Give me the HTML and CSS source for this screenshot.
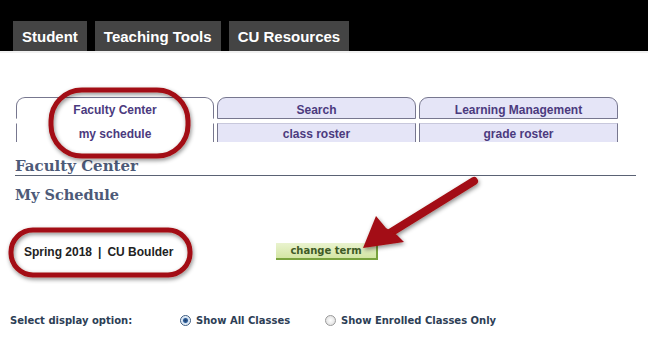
FILE: index.html
```html
<!DOCTYPE html>
<html lang="en">
<head>
    <meta charset="UTF-8">
    <title>My Schedule - Faculty Center</title>
    <link rel="stylesheet" href="styles.css">
</head>
<body>
    <div class="topbar">
        <div class="top-tab">Student</div>
        <div class="top-tab">Teaching Tools</div>
        <div class="top-tab">CU Resources</div>
    </div>

    <div class="page">
        <div class="tabs">
            <div class="tab-col active">
                <div class="tab-top">Faculty Center</div>
                <div class="tab-sub">my schedule</div>
            </div>
            <div class="tab-col">
                <div class="tab-top">Search</div>
                <div class="tab-sub">class roster</div>
            </div>
            <div class="tab-col">
                <div class="tab-top">Learning Management</div>
                <div class="tab-sub">grade roster</div>
            </div>
        </div>

        <h2 class="section-title">Faculty Center</h2>
        <h1 class="page-title">My Schedule</h1>

        <div class="term-row">
            <span class="term">Spring 2018<span class="sep">|</span>CU Boulder</span>
            <span class="btn-change">change term</span>
        </div>

        <div class="display-row">
            <span class="display-label">Select display option:</span>
            <label class="radio"><span class="dot checked"></span>Show All Classes</label>
            <label class="radio"><span class="dot"></span>Show Enrolled Classes Only</label>
        </div>
    </div>

    <!-- annotation marks drawn over the page -->
    <svg class="annot" width="648" height="343" viewBox="0 0 648 343">
        <defs>
            <filter id="shade" x="-20%" y="-20%" width="140%" height="140%">
                <feDropShadow dx="1" dy="2" stdDeviation="2" flood-color="#000" flood-opacity="0.45"/>
            </filter>
        </defs>
        <rect x="51" y="90" width="137" height="66" rx="31" ry="31" fill="none" stroke="#a30f12" stroke-width="5" filter="url(#shade)"/>
        <rect x="11" y="230" width="179" height="45" rx="22" ry="22" fill="none" stroke="#a30f12" stroke-width="5" filter="url(#shade)"/>
        <g filter="url(#shade)">
            <line x1="474" y1="181" x2="390" y2="233" stroke="#a30f12" stroke-width="8" stroke-linecap="round"/>
            <polygon points="363,248 376,216 386,228 397,235 404,242" fill="#a30f12"/>
        </g>
    </svg>
</body>
</html>
```

FILE: styles.css
```css
body {
    margin: 0;
    background-color: #ffffff;
    font-family: "Liberation Sans", Arial, sans-serif;
    width: 648px;
    height: 343px;
    overflow: hidden;
    position: relative;
}
.topbar {
    height: 51px;
    background-color: #000000;
    display: flex;
    align-items: flex-end;
    gap: 8px;
    padding-left: 13px;
    border-bottom: 2px solid #f0f0f0;
}
.top-tab {
    height: 30px;
    line-height: 31px;
    padding: 0 9px;
    background-color: #444444;
    color: #ffffff;
    font-weight: bold;
    font-size: 15px;
}
.page {
    padding: 0 12px 0 15px;
}
.tabs {
    display: grid;
    grid-template-columns: 198px 199px 199px;
    gap: 3px;
    margin: 44px 0 0 1px;
}
.tab-col {
    display: flex;
    flex-direction: column;
    gap: 4px;
}
.tab-top, .tab-sub {
    text-align: center;
    font-weight: bold;
    font-size: 12px;
    color: #4b3a7e;
    background-color: #e5e5f7;
    border: 1px solid #77778f;
}
.tab-top {
    height: 20px;
    line-height: 24px;
    border-radius: 9px 9px 0 0;
}
.tab-sub {
    height: 18px;
    line-height: 21px;
    border-top-color: #c8c8dc;
    border-bottom: none;
}
.tab-col.active .tab-top,
.tab-col.active .tab-sub {
    background-color: #ffffff;
    border-bottom-color: transparent;
    border-top-color: #ffffff;
}
.tab-col.active .tab-top {
    border-top-color: #77778f;
}
.tab-col.active .tab-sub {
    border-right-color: #77778f;
}
.section-title {
    margin: 15px 0 0;
    font-family: "DejaVu Serif", Georgia, serif;
    font-size: 15px;
    line-height: 18px;
    color: #4d5a78;
    border-bottom: 1px solid #5a6274;
}
.page-title {
    margin: 9px 0 0;
    font-family: "DejaVu Serif", Georgia, serif;
    font-size: 14.5px;
    line-height: 20px;
    color: #4d5a78;
}
.term-row {
    display: flex;
    align-items: center;
    margin-top: 38px;
    padding-left: 9px;
}
.term {
    font-weight: bold;
    font-size: 12px;
    color: #222222;
    width: 252px;
}
.sep {
    margin: 0 6px;
}
.btn-change {
    width: 100px;
    height: 15px;
    line-height: 15px;
    text-align: center;
    font-family: "DejaVu Sans", Verdana, sans-serif;
    font-weight: bold;
    font-size: 10px;
    color: #3f5b26;
    background: linear-gradient(#eaf3cf, #d3e6a4);
    border-right: 2px solid #79a33e;
    border-bottom: 2px solid #79a33e;
}
.display-row {
    display: flex;
    align-items: center;
    margin-top: 55px;
    margin-left: -5px;
    font-family: "DejaVu Sans", Verdana, sans-serif;
    font-weight: bold;
    font-size: 10px;
    color: #2d3e55;
}
.display-label {
    width: 170px;
}
.radio {
    display: flex;
    align-items: center;
    gap: 5px;
}
.radio:first-of-type {
    width: 145px;
}
.dot {
    width: 11px;
    height: 11px;
    border-radius: 50%;
    border: 1px solid #9a9a9a;
    background: radial-gradient(#ffffff, #d8d8d8);
    box-sizing: border-box;
}
.dot.checked {
    border-color: #3a5a80;
    background: radial-gradient(circle, #1f3d66 0, #2f5f9a 2px, #cfe0f2 3px, #ffffff 5px);
}
.annot {
    position: absolute;
    left: 0;
    top: 0;
    pointer-events: none;
}
```
